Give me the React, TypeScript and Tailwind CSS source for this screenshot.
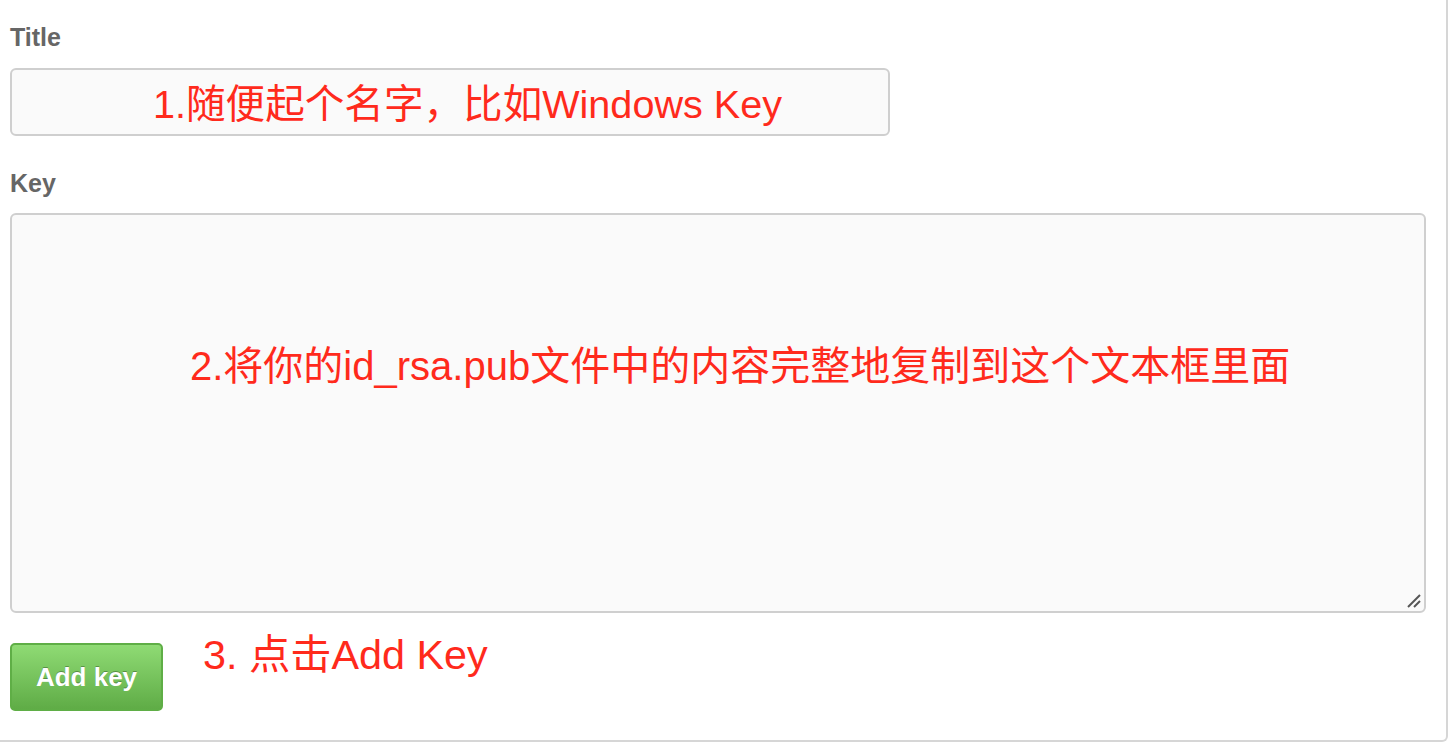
import React from "react";

const red = "text-[#ff2a1c]";
const font = "font-['Liberation_Sans','Noto_Sans_CJK_SC',sans-serif]";

export default function App() {
  return (
    <div className={`w-[1452px] h-[742px] bg-white overflow-hidden ${font}`}>
      <div className="w-[1448px] h-[742px] border-r-2 border-b-2 border-[#d6d6d6] rounded-br-[6px] pl-[10px] pt-[22px] flex flex-col">
        <label className="text-[25px] leading-[30px] font-bold text-[#666]">Title</label>
        <div className="mt-[16px] w-[880px] h-[68px] border-2 border-[#cfcfcf] rounded-[6px] bg-[#fafafa] flex items-center pl-[141px] pt-[4px]">
          <span className={`text-[39.6px] leading-[48px] whitespace-nowrap ${red}`}>1.随便起个名字，比如Windows Key</span>
        </div>
        <label className="mt-[32px] text-[25px] leading-[30px] font-bold text-[#666]">Key</label>
        <div className="relative mt-[15px] w-[1416px] h-[400px] border-2 border-[#cfcfcf] rounded-[6px] bg-[#fafafa] pl-[178px] pt-[127px]">
          <span className={`text-[40px] leading-[48px] whitespace-nowrap ${red}`}>2.将你的id_rsa.pub文件中的内容完整地复制到这个文本框里面</span>
          <svg className="absolute right-[2px] bottom-[2px]" width="16" height="16" viewBox="0 0 16 16">
            <line x1="2" y1="14" x2="14" y2="2" stroke="#555" strokeWidth="2" />
            <line x1="8" y1="14" x2="14" y2="8" stroke="#555" strokeWidth="2" />
          </svg>
        </div>
        <div className="mt-[30px] flex items-start">
          <button className="w-[153px] h-[68px] rounded-[5px] border-2 border-[#5fae46] bg-gradient-to-b from-[#8fdb74] to-[#5fac46] text-white text-[26px] font-bold [text-shadow:0_-1px_0_rgba(0,0,0,0.3)] flex items-center justify-center">
            Add key
          </button>
          <span className={`ml-[40px] -mt-[12px] text-[41.3px] leading-[48px] whitespace-nowrap ${red}`}>3. 点击Add Key</span>
        </div>
      </div>
    </div>
  );
}
